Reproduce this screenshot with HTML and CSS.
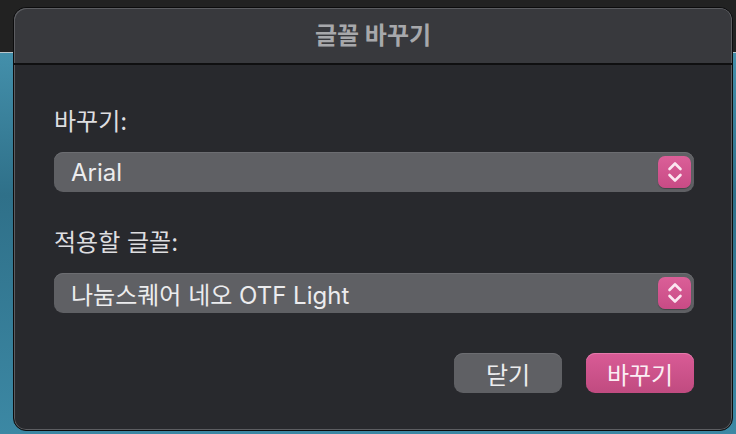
FILE: index.html
```html
<!DOCTYPE html>
<html lang="ko">
<head>
  <meta charset="UTF-8">
  <meta name="viewport" content="width=device-width, initial-scale=1.0">
  <title>글꼴 바꾸기</title>
  <link rel="stylesheet" href="styles.css">
</head>
<body>

  <div class="dialog">
    <div class="title-bar">글꼴 바꾸기</div>

    <div class="dialog-body">
      <div class="field">
        <div class="field-label">바꾸기:</div>
        <div class="popup">
          <span class="popup-value">Arial</span>
          <span class="stepper">
            <svg width="16" height="22" viewBox="0 0 16 22">
              <path d="M2.5 8 L8 2.5 L13.5 8 M2.5 14 L8 19.5 L13.5 14" fill="none" stroke="#fbe6f0" stroke-width="2.6" stroke-linecap="round" stroke-linejoin="round"/>
            </svg>
          </span>
        </div>
      </div>

      <div class="field">
        <div class="field-label">적용할 글꼴:</div>
        <div class="popup">
          <span class="popup-value">나눔스퀘어 네오 OTF Light</span>
          <span class="stepper">
            <svg width="16" height="22" viewBox="0 0 16 22">
              <path d="M2.5 8 L8 2.5 L13.5 8 M2.5 14 L8 19.5 L13.5 14" fill="none" stroke="#fbe6f0" stroke-width="2.6" stroke-linecap="round" stroke-linejoin="round"/>
            </svg>
          </span>
        </div>
      </div>

      <!-- buttons -->
      <div class="actions">
        <button class="btn">닫기</button>
        <button class="btn btn-primary">바꾸기</button>
      </div>
    </div>
  </div>

</body>
</html>
```

FILE: styles.css
```css
body {
  margin: 0;
  height: 434px;
  overflow: hidden;
  font-family: "Inter", "Noto Sans CJK KR", sans-serif;
  background:
    linear-gradient(#222222 0, #222222 52px, #b9c6cc 52px, #b9c6cc 53px, transparent 53px),
    linear-gradient(#4b9bb7 0%, #2f7089 45%, #3c88a4 100%);
}
.dialog {
  box-sizing: border-box;
  width: 720px;
  height: 424px;
  margin: 7px 0 0 13px;
  background-color: #28292d;
  border: 1px solid #0c0c0d;
  border-radius: 13px;
  box-shadow: inset 0 0 0 1px #5c5d61;
  overflow: hidden;
}
.title-bar {
  height: 55px;
  background-color: #38393d;
  border-bottom: 2px solid #0f0f10;
  box-shadow: inset 1px 1px 0 #5c5d61, inset -1px 0 0 #5c5d61;
  border-radius: 12px 12px 0 0;
  color: #a7a8ab;
  font-size: 24px;
  font-weight: 700;
  text-align: center;
  line-height: 56px;
}
.dialog-body {
  padding: 42px 38px 0 40px;
}
.field {
  margin-bottom: 36px;
}
.field-label {
  color: #dedee0;
  font-size: 24px;
  line-height: 30px;
  margin-bottom: 15px;
}
.popup {
  display: flex;
  align-items: center;
  justify-content: space-between;
  height: 40px;
  box-sizing: border-box;
  padding: 0 3px 0 17px;
  background-color: #5f6064;
  border-radius: 9px;
  box-shadow: inset 0 1px 0 #6c6d71;
}
.popup-value {
  color: #ececee;
  font-size: 24px;
}
.stepper {
  display: flex;
  align-items: center;
  justify-content: center;
  width: 33px;
  height: 32px;
  background: linear-gradient(#db5f98, #c84b85);
  border-radius: 7px;
  box-shadow: 0 1px 1px rgba(0, 0, 0, 0.3);
}
.actions {
  display: flex;
  justify-content: flex-end;
  gap: 24px;
  margin-top: 40px;
}
.btn {
  width: 108px;
  height: 40px;
  border: none;
  border-radius: 9px;
  background-color: #5f6064;
  box-shadow: inset 0 1px 0 #6c6d71;
  color: #ececee;
  font-family: "Inter", "Noto Sans CJK KR", sans-serif;
  font-size: 24px;
  cursor: pointer;
}
.btn-primary {
  background: linear-gradient(#d95b96, #c04b80);
  box-shadow: inset 0 1px 0 #e47aab;
  color: #fbeef4;
}
```
